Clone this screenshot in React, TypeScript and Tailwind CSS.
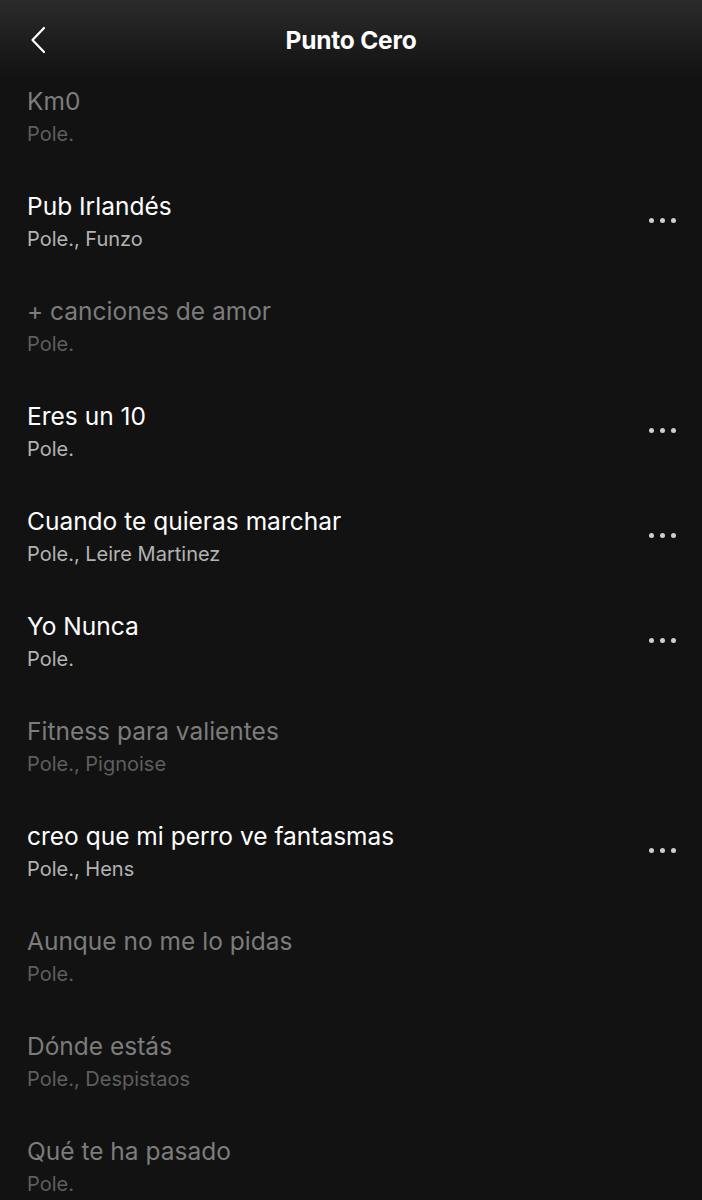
import React from "react";

interface Track {
  title: string;
  artists: string;
  available: boolean;
}

const tracks: Track[] = [
  { title: "Km0", artists: "Pole.", available: false },
  { title: "Pub Irlandés", artists: "Pole., Funzo", available: true },
  { title: "+ canciones de amor", artists: "Pole.", available: false },
  { title: "Eres un 10", artists: "Pole.", available: true },
  { title: "Cuando te quieras marchar", artists: "Pole., Leire Martinez", available: true },
  { title: "Yo Nunca", artists: "Pole.", available: true },
  { title: "Fitness para valientes", artists: "Pole., Pignoise", available: false },
  { title: "creo que mi perro ve fantasmas", artists: "Pole., Hens", available: true },
  { title: "Aunque no me lo pidas", artists: "Pole.", available: false },
  { title: "Dónde estás", artists: "Pole., Despistaos", available: false },
  { title: "Qué te ha pasado", artists: "Pole.", available: false },
];

function MoreDots() {
  return (
    <div className="flex items-center gap-[6px]" aria-label="More options">
      <span className="h-[5px] w-[5px] rounded-full bg-[#cfcfcf]" />
      <span className="h-[5px] w-[5px] rounded-full bg-[#cfcfcf]" />
      <span className="h-[5px] w-[5px] rounded-full bg-[#cfcfcf]" />
    </div>
  );
}

function TrackRow({ track }: { track: Track }) {
  return (
    <div className="flex h-[105px] items-center justify-between pl-[27px] pr-[26px]">
      <div className="flex min-w-0 flex-col">
        <div
          className={`text-[24.5px] leading-[30px] tracking-[0px] ${
            track.available ? "text-white" : "text-[#7c7c7c]"
          }`}
        >
          {track.title}
        </div>
        <div
          className={`mt-[6px] text-[20px] leading-[24px] ${
            track.available ? "text-[#b3b3b3]" : "text-[#5e5e5e]"
          }`}
        >
          {track.artists}
        </div>
      </div>
      {track.available && <MoreDots />}
    </div>
  );
}

export default function App() {
  return (
    <div
      className="relative h-[1200px] w-full overflow-hidden bg-[#121212]"
      style={{ fontFamily: "Inter, 'Noto Sans', sans-serif" }}
    >
      <div className="flex flex-col pt-[63px]">
        {tracks.map((t) => (
          <TrackRow key={t.title} track={t} />
        ))}
      </div>
      <header className="absolute inset-x-0 top-0 flex h-[80px] items-center justify-center bg-gradient-to-b from-[#2b2b2b] via-[#1b1b1b] via-60% to-[#121212]/0">
        <button className="absolute left-[27px] top-[25px]" aria-label="Back">
          <svg width="22" height="30" viewBox="0 0 22 30" fill="none">
            <path d="M17 3 L5.5 15 L17 27" stroke="white" strokeWidth="2.2" strokeLinecap="round" strokeLinejoin="round" />
          </svg>
        </button>
        <h1 className="text-[24.5px] font-bold tracking-[-0.2px] text-white">Punto Cero</h1>
      </header>
    </div>
  );
}
